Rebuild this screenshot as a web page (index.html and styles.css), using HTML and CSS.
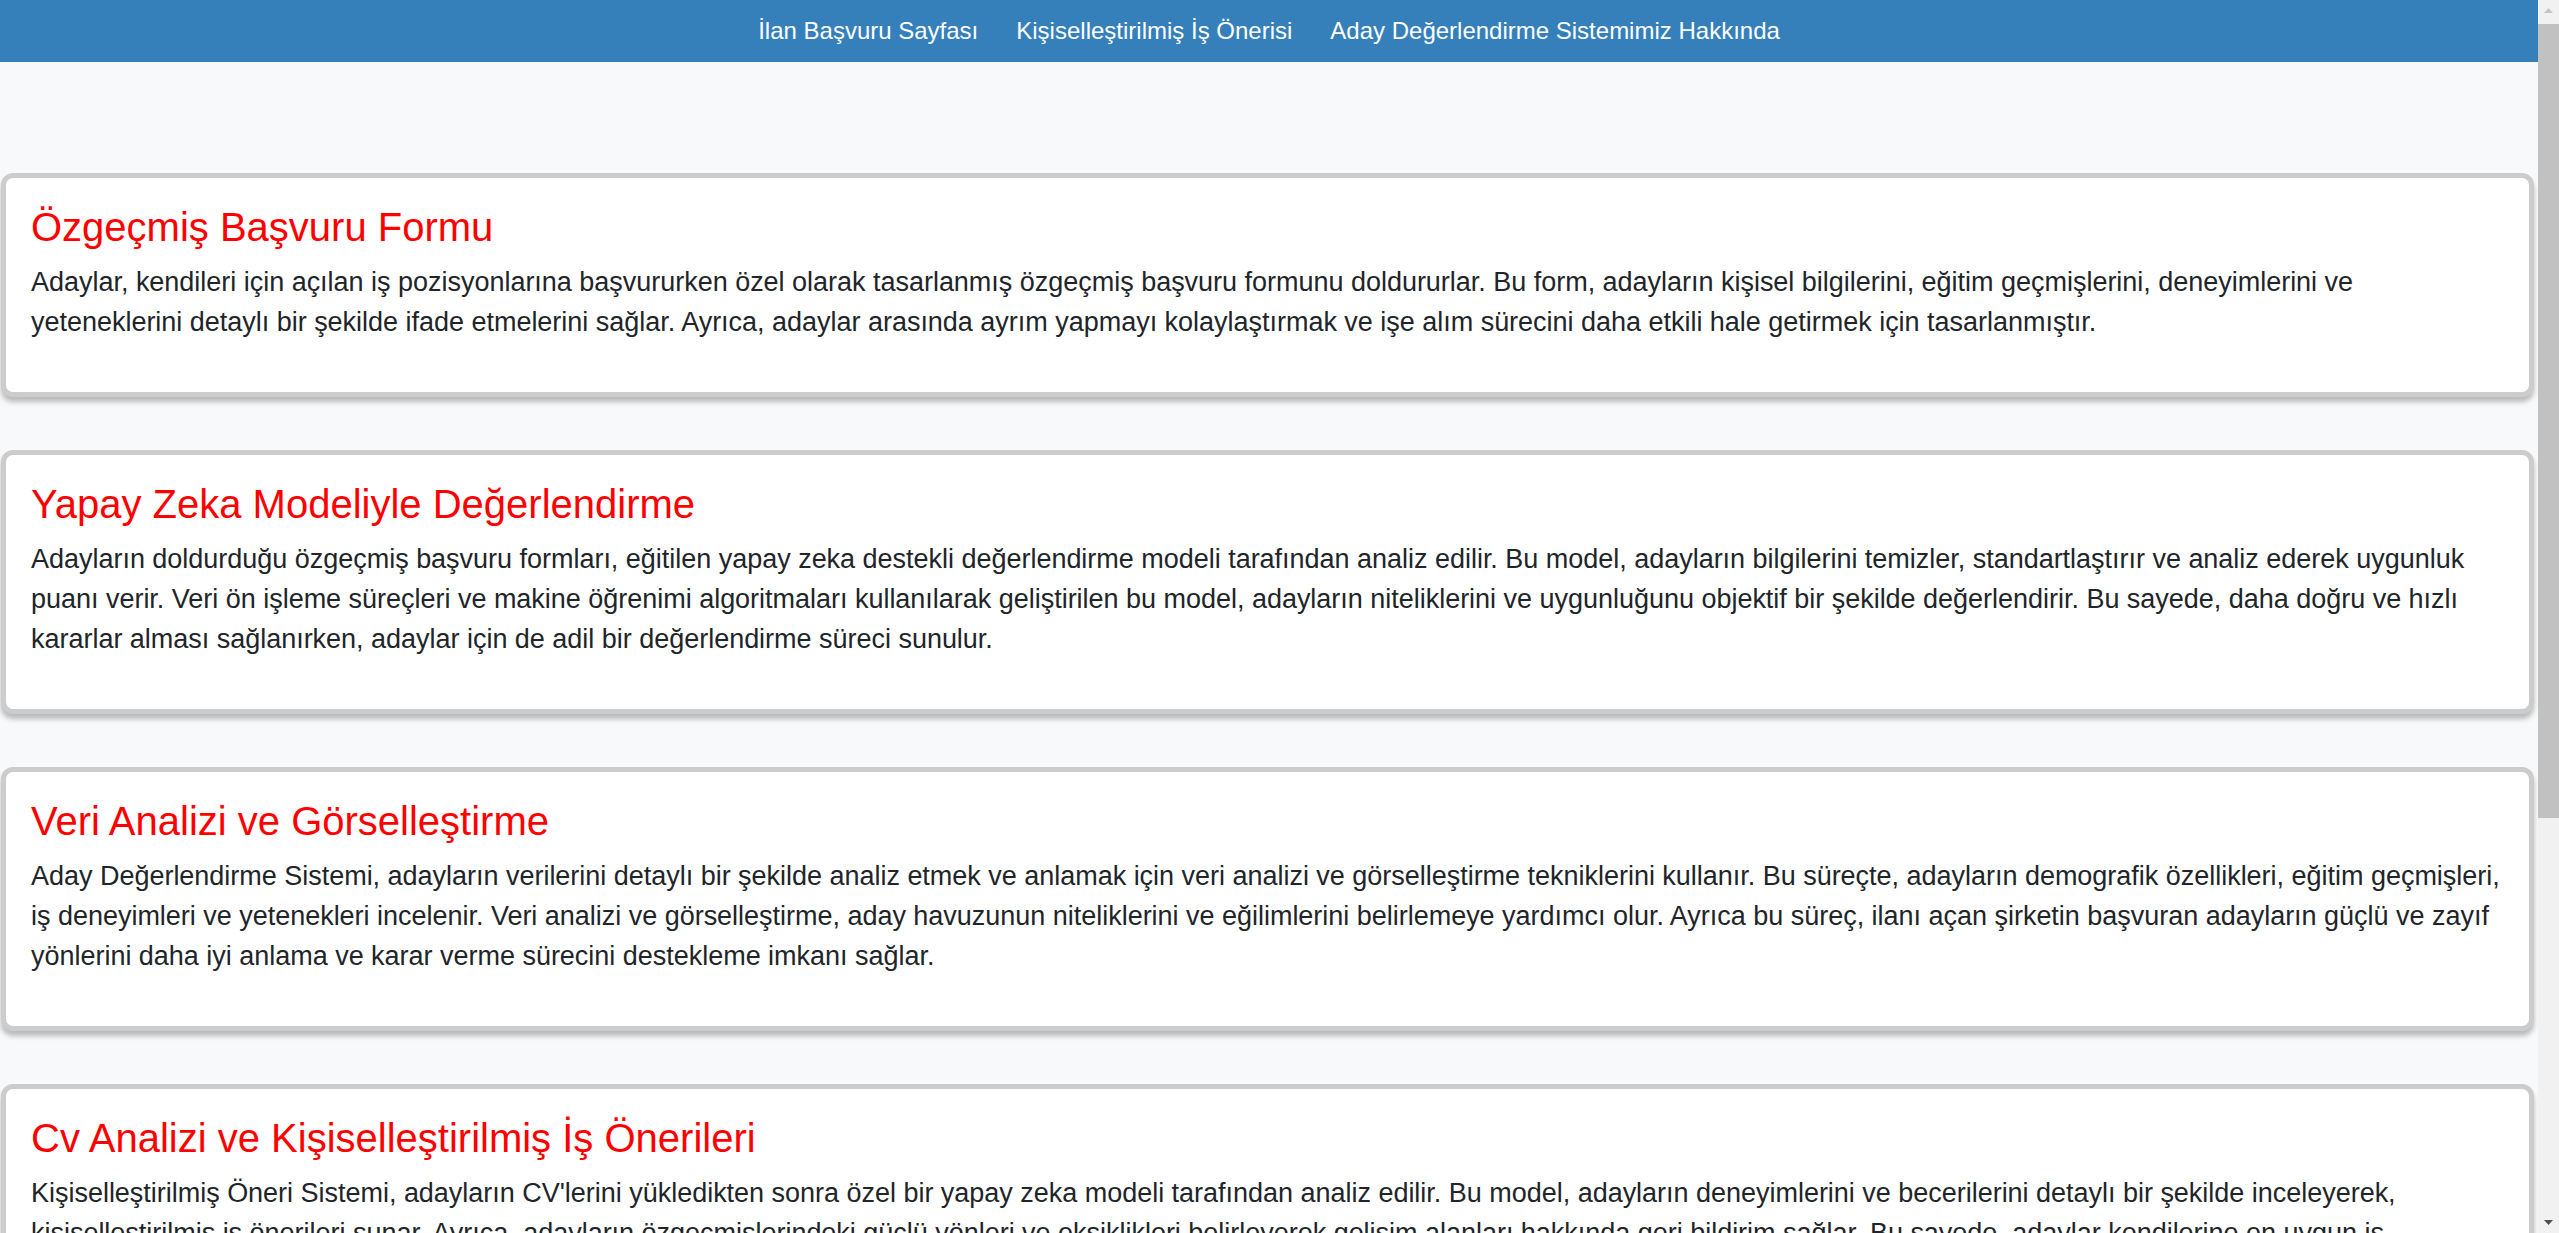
FILE: index.html
```html
<!DOCTYPE html>
<html lang="tr">
<head>
<meta charset="utf-8">
<title>Aday Değerlendirme Sistemi</title>
<link rel="stylesheet" href="styles.css">
</head>
<body>
<div class="page">
  <nav class="topnav">
    <a class="navlink" href="#">İlan Başvuru Sayfası</a>
    <a class="navlink" href="#">Kişiselleştirilmiş İş Önerisi</a>
    <a class="navlink" href="#">Aday Değerlendirme Sistemimiz Hakkında</a>
  </nav>
  <main class="content">
    <section class="card">
      <h3 class="card-title">Özgeçmiş Başvuru Formu</h3>
      <p class="card-text">Adaylar, kendileri için açılan iş pozisyonlarına başvururken özel olarak tasarlanmış özgeçmiş başvuru formunu doldururlar. Bu form, adayların kişisel bilgilerini, eğitim geçmişlerini, deneyimlerini ve<br>yeteneklerini detaylı bir şekilde ifade etmelerini sağlar. Ayrıca, adaylar arasında ayrım yapmayı kolaylaştırmak ve işe alım sürecini daha etkili hale getirmek için tasarlanmıştır.</p>
    </section>
    <section class="card">
      <h3 class="card-title">Yapay Zeka Modeliyle Değerlendirme</h3>
      <p class="card-text">Adayların doldurduğu özgeçmiş başvuru formları, eğitilen yapay zeka destekli değerlendirme modeli tarafından analiz edilir. Bu model, adayların bilgilerini temizler, standartlaştırır ve analiz ederek uygunluk puanı verir. Veri ön işleme süreçleri ve makine öğrenimi algoritmaları kullanılarak geliştirilen bu model, adayların niteliklerini ve uygunluğunu objektif bir şekilde değerlendirir. Bu sayede, daha doğru ve hızlı kararlar alması sağlanırken, adaylar için de adil bir değerlendirme süreci sunulur.</p>
    </section>
    <section class="card">
      <h3 class="card-title">Veri Analizi ve Görselleştirme</h3>
      <p class="card-text">Aday Değerlendirme Sistemi, adayların verilerini detaylı bir şekilde analiz etmek ve anlamak için veri analizi ve görselleştirme tekniklerini kullanır. Bu süreçte, adayların demografik özellikleri, eğitim geçmişleri, iş deneyimleri ve yetenekleri incelenir. Veri analizi ve görselleştirme, aday havuzunun niteliklerini ve eğilimlerini belirlemeye yardımcı olur. Ayrıca bu süreç, ilanı açan şirketin başvuran adayların güçlü ve zayıf yönlerini daha iyi anlama ve karar verme sürecini destekleme imkanı sağlar.</p>
    </section>
    <section class="card">
      <h3 class="card-title">Cv Analizi ve Kişiselleştirilmiş İş Önerileri</h3>
      <p class="card-text">Kişiselleştirilmiş Öneri Sistemi, adayların CV'lerini yükledikten sonra özel bir yapay zeka modeli tarafından analiz edilir. Bu model, adayların deneyimlerini ve becerilerini detaylı bir şekilde inceleyerek, kişiselleştirilmiş iş önerileri sunar. Ayrıca, adayların özgeçmişlerindeki güçlü yönleri ve eksiklikleri belirleyerek gelişim alanları hakkında geri bildirim sağlar. Bu sayede, adaylar kendilerine en uygun iş fırsatlarını daha kolay ve hızlı bir şekilde bulabilirler.</p>
    </section>
    <section class="card">
      <h3 class="card-title">Adil ve Şeffaf Değerlendirme</h3>
      <p class="card-text">Sistemimiz, tüm adayları aynı kriterlere göre değerlendirerek adil ve şeffaf bir işe alım süreci sunar. Değerlendirme sonuçları, hem adaylar hem de ilanı açan şirketler için anlaşılır bir şekilde raporlanır.</p>
    </section>
  </main>
</div>
<div class="scrollbar" aria-hidden="true">
  <div class="sb-button">
    <svg width="9" height="5" viewBox="0 0 9 5"><polygon points="0,5 4.5,0 9,5" fill="#c6c6c6"/></svg>
  </div>
  <div class="sb-gap"></div>
  <div class="sb-thumb"></div>
  <div class="sb-track"></div>
  <div class="sb-button">
    <svg width="9" height="5" viewBox="0 0 9 5"><polygon points="0,0 9,0 4.5,5" fill="#505050"/></svg>
  </div>
</div>
</body>
</html>
```

FILE: styles.css
```css
html {
  background: #f8f9fa;
  scrollbar-width: none;
}

html::-webkit-scrollbar {
  display: none;
}

body {
  margin: 0;
  background: #f8f9fa;
  font-family: "Liberation Sans", Arial, sans-serif;
  color: #212529;
  display: flex;
  align-items: flex-start;
}

.page {
  flex: 1;
  min-width: 0;
}

.scrollbar {
  flex: 0 0 21px;
  width: 21px;
  height: 100vh;
  position: sticky;
  top: 0;
  background: #f1f1f1;
  display: flex;
  flex-direction: column;
}

.sb-button {
  height: 21px;
  flex: 0 0 21px;
  display: flex;
  align-items: center;
  justify-content: center;
}

.sb-gap {
  flex: 0 0 3px;
}

.sb-thumb {
  flex: 0 0 794px;
  background: #c1c1c1;
}

.sb-track {
  flex: 1;
}

.topnav {
  height: 62px;
  background: #3580ba;
  display: flex;
  justify-content: center;
  align-items: center;
}

.navlink {
  color: #ffffff;
  text-decoration: none;
  font-size: 24px;
  padding: 0 19px;
}

.content {
  padding: 111px 4px 80px 1px;
}

.card {
  background: #ffffff;
  border: 5px solid #cccccc;
  border-radius: 12px;
  box-shadow: 0 5px 5px rgba(0, 0, 0, 0.25);
  padding: 25px 20px 30px 25px;
  margin-bottom: 53px;
}

.card-title {
  margin: 0 0 11px;
  font-size: 40px;
  font-weight: normal;
  line-height: 48px;
  color: #ff0000;
}

.card-text {
  margin: 0 0 20px;
  font-size: 27px;
  letter-spacing: -0.02px;
  line-height: 40px;
}
```
